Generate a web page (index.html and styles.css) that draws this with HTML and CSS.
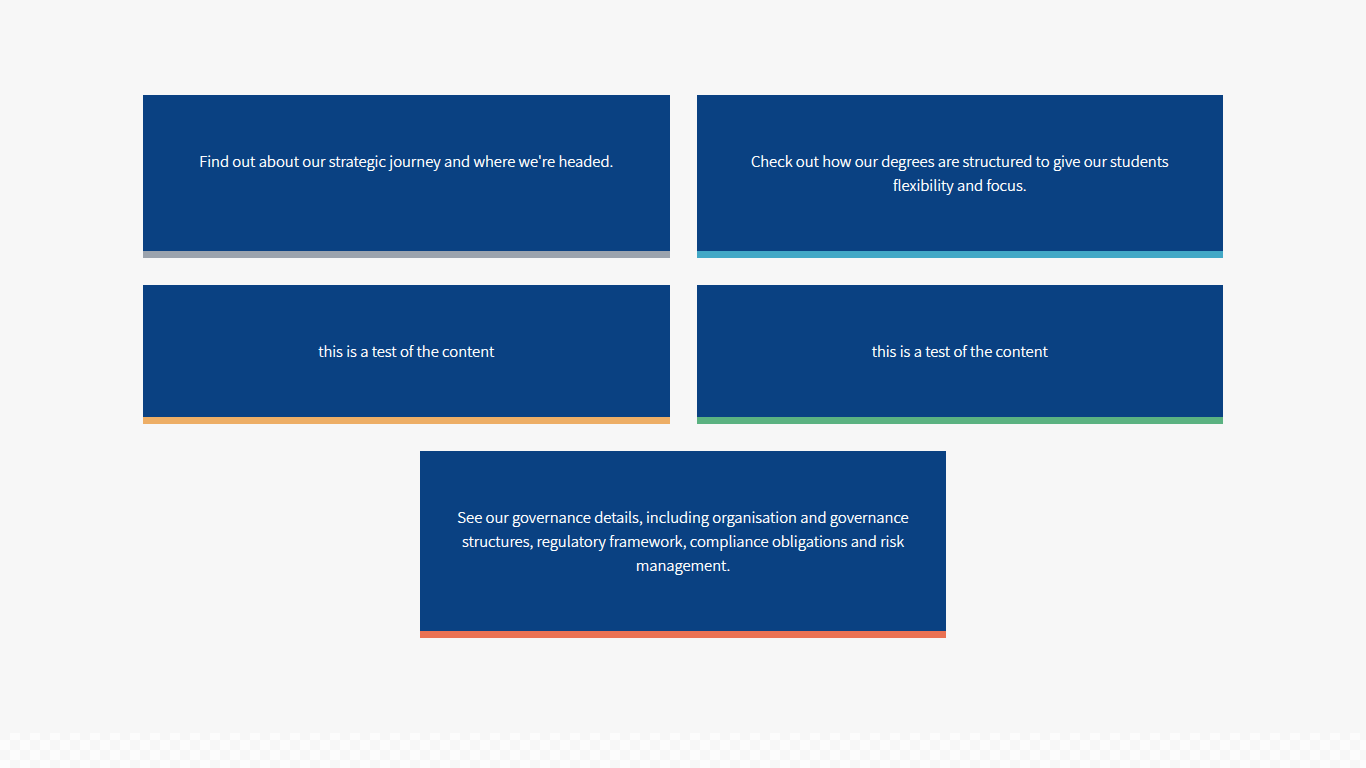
FILE: index.html
```html
<!DOCTYPE html>
<html lang="en">
<head>
<meta charset="utf-8">
<meta name="viewport" content="width=device-width, initial-scale=1">
<title>About us</title>
<link rel="stylesheet" href="styles.css">
</head>
<body>
<main class="section">
  <div class="cards">
    <article class="card card--grey"><p class="card__text">Find out about our strategic journey and where we're headed.</p></article>
    <article class="card card--teal"><p class="card__text">Check out how our degrees are structured to give our students flexibility and focus.</p></article>
    <article class="card card--amber"><p class="card__text">this is a test of the content</p></article>
    <article class="card card--green"><p class="card__text">this is a test of the content</p></article>
    <article class="card card--coral"><p class="card__text">See our governance details, including organisation and governance structures, regulatory framework, compliance obligations and risk management.</p></article>
  </div>
</main>
</body>
</html>
```

FILE: styles.css
```css
* {
  box-sizing: border-box;
}

body {
  margin: 0;
  min-height: 100vh;
  font-family: "Noto Sans CJK SC", "Noto Sans", sans-serif;
  font-size: 15px;
  font-weight: 300;
  line-height: 24px;
  background: repeating-conic-gradient(#f7f7f7 0% 25%, #fcfcfc 25% 50%) 0 0 / 20px 20px;
}

.section {
  padding: 95px 27px;
  background: #f7f7f7;
}

.cards {
  display: flex;
  flex-wrap: wrap;
  justify-content: center;
  gap: 27px;
  max-width: 1080px;
  margin: 0 auto;
}

.card {
  flex: 0 0 calc((100% - 27px) / 2);
  padding: 54px 27px;
  border-bottom: 7px solid;
  background: #0a4182;
  text-align: center;
}

.card__text {
  margin: 0;
  color: #fff;
  text-shadow: 0 0 0 #fff;
}

.card--grey {
  border-color: #9ba3ad;
}

.card--teal {
  border-color: #42a8c6;
}

.card--amber {
  border-color: #edae66;
}

.card--green {
  border-color: #5bb281;
}

.card--coral {
  border-color: #ea7153;
}

@media (max-width: 700px) {
  .card {
    flex-basis: 100%;
  }
}
```
